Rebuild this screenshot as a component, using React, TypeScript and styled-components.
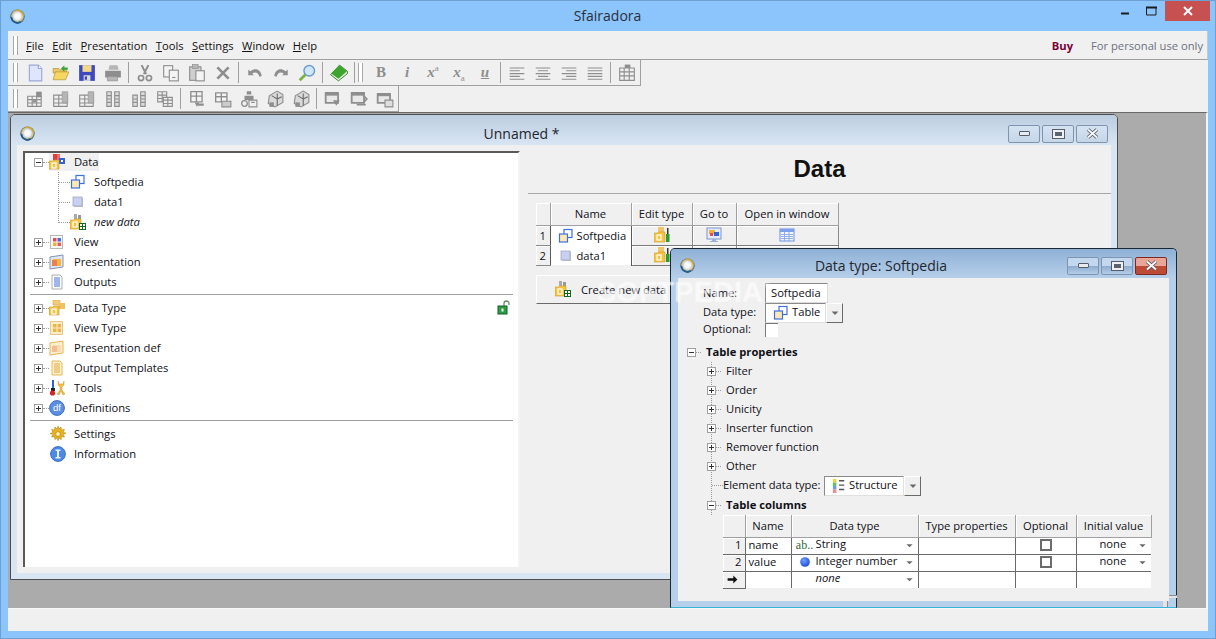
import React from "react";
import styled, { createGlobalStyle } from "styled-components";

const Global = createGlobalStyle`
  html, body { margin: 0; padding: 0; overflow: hidden; background: #8cc5fb; }
  body { font-family: "Open Sans", "Noto Sans", sans-serif; font-size: 11.2px; color: #101018; }
  * { box-sizing: border-box; }
`;

/* ---------- icons ---------- */
const G = "#8e8e8e";
const GL = "#b5b5b5";

const drawings: Record<string, React.ReactNode> = {
  appRing: (
    <>
      <defs>
        <radialGradient id="ringCore" cx="50%" cy="48%" r="52%">
          <stop offset="0%" stopColor="#ffffff" />
          <stop offset="42%" stopColor="#f2f3f5" />
          <stop offset="62%" stopColor="#c9ccd4" />
          <stop offset="74%" stopColor="#d8c77a" />
          <stop offset="100%" stopColor="#24435f" />
        </radialGradient>
      </defs>
      <circle cx="8" cy="8" r="7.6" fill="url(#ringCore)" />
      <path d="M1.5 8.500a6.600 6.600 0 0 0 10 5.200" fill="none" stroke="#1f5d92" strokeWidth="1.800" />
      <path d="M6 1.500a6.800 6.800 0 0 1 8.500 6" fill="none" stroke="#c9a93e" strokeWidth="1.600" />
    </>
  ),
  dataFolder: (
    <>
      <rect x="4" y="0" width="4" height="6" fill="#e33c3c" /><rect x="8" y="0" width="3" height="6" fill="#e86a6a" />
      <rect x="10" y="4" width="6" height="6" fill="#2f62d8" /><rect x="12" y="6" width="2" height="2" fill="#fff" />
      <path d="M0 7h4l1-1h5v9H0z" fill="#f5c443" stroke="#c99a2a" strokeWidth=".6" />
      <rect x="3" y="9" width="4" height="5" fill="none" stroke="#fff" strokeWidth="1.2" />
    </>
  ),
  dataFolderPale: (
    <>
      <rect x="4" y="0" width="7" height="5" fill="#f3cd7c" stroke="#d6a850" strokeWidth=".6" />
      <rect x="10" y="3" width="6" height="6" fill="#f2c05c" />
      <path d="M0 7h4l1-1h5v9H0z" fill="#f5c443" stroke="#c99a2a" strokeWidth=".6" />
      <rect x="3" y="9" width="4" height="5" fill="none" stroke="#fff" strokeWidth="1.2" />
    </>
  ),
  table: (
    <>
      <rect x="6" y="1.5" width="8" height="8" fill="#fff" stroke="#3f6fdc" strokeWidth="1.2" />
      <rect x="1.5" y="6" width="8" height="8" fill="#fde9b5" stroke="#3f6fdc" strokeWidth="1.2" />
    </>
  ),
  square: (
    <>
      <rect x="4" y="4" width="9" height="9" fill="#c5c5cf" />
      <rect x="3" y="3" width="9" height="9" fill="#c7cff2" stroke="#a5a8bd" strokeWidth=".8" />
    </>
  ),
  newData: (
    <>
      <rect x="4" y="0" width="3" height="5" fill="#aaa" /><rect x="8" y="1" width="3" height="4" fill="#999" />
      <path d="M0 6h4l1-1h6v10H0z" fill="#f5c443" stroke="#c99a2a" strokeWidth=".6" />
      <rect x="3" y="8" width="4" height="5" fill="none" stroke="#fff" strokeWidth="1.2" />
      <rect x="9.5" y="9.5" width="6" height="6" fill="#fff" stroke="#11661f" />
      <path d="M12.5 10v5M10 12.5h5" stroke="#11661f" />
    </>
  ),
  view: (
    <>
      <rect x="1.5" y="1.5" width="12" height="13" fill="#fafafa" stroke="#b8b8b8" />
      <rect x="4" y="4" width="3.5" height="3.5" fill="#e34c4c" /><rect x="8.5" y="4" width="3.5" height="3.5" fill="#3f6fdc" />
      <rect x="4" y="8.5" width="3.5" height="3.5" fill="#f1b035" /><rect x="8.5" y="8.5" width="3.5" height="3.5" fill="#e0605a" />
    </>
  ),
  viewType: (
    <>
      <rect x="1.5" y="1.5" width="12" height="13" fill="#fdeec5" stroke="#e6c98a" />
      <rect x="4" y="4" width="3.5" height="3.5" fill="#edb44a" /><rect x="8.5" y="4" width="3.5" height="3.5" fill="#edb44a" />
      <rect x="4" y="8.5" width="3.5" height="3.5" fill="#edb44a" /><rect x="8.5" y="8.5" width="3.5" height="3.5" fill="#edb44a" />
    </>
  ),
  presentation: (
    <>
      <path d="M1 3l13-2v12l-13 2z" fill="#dfe6f6" stroke="#8392b5" />
      <rect x="4" y="5" width="8" height="7" fill="#f5b83c" /><rect x="3" y="6" width="5" height="6" fill="#ea7e55" />
    </>
  ),
  presDef: (
    <>
      <path d="M1 3l13-2v12l-13 2z" fill="#fdf0cc" stroke="#e7b450" />
      <rect x="4" y="5" width="8" height="7" fill="#f8dcb0" /><rect x="3" y="6" width="5" height="6" fill="#f0bd94" />
    </>
  ),
  outputs: (
    <>
      <path d="M3 1h8l2 2v12H3z" fill="#fff" stroke="#adadad" />
      <path d="M5 4h6M5 6h6M5 8h6M5 10h6M5 12h6" stroke="#3f6fdc" />
    </>
  ),
  outputTpl: (
    <>
      <path d="M3 1h8l2 2v12H3z" fill="#fdf3d2" stroke="#eeb64e" />
      <path d="M5 4h6M5 6h6M5 8h6M5 10h6M5 12h6" stroke="#e0a63a" />
    </>
  ),
  tools: (
    <>
      <path d="M3 0h2v8H3z" fill="#2f62d8" /><path d="M2 8h4v3H2z" fill="#222" />
      <circle cx="3.5" cy="13" r="2.6" fill="#d4262a" />
      <path d="M9 1v4l2 2v3l-3 4 2 1 2-4 2 4 2-1-3-4V7l2-2V1l-1 3h-4z" fill="#f3be46" stroke="#b98d24" strokeWidth=".4" />
    </>
  ),
  df: (
    <>
      <circle cx="8" cy="8" r="7.4" fill="#5a8fe2" stroke="#3e6fc4" />
      <text x="8" y="11.3" textAnchor="middle" fontSize="9.5" fontFamily="Liberation Sans" fill="#fff">df</text>
    </>
  ),
  gear: (
    <>
      <path d="M8 0l1 3 2-2 .5 3 3-.5-1.5 2.7 3 1-3 1.3 1.5 2.5-3-.3-.5 3-2-2-1 3-1-3-2 2-.5-3-3 .3L3 8.5 0 7.5l3-1L1.500 3.500l3 .5L5 1l2 2z" fill="#e8b31f" stroke="#a87d0c" strokeWidth=".5" />
      <circle cx="8" cy="8" r="2.300" fill="#fff4c4" stroke="#b58a12" strokeWidth=".7" />
    </>
  ),
  info: (
    <>
      <circle cx="8" cy="8" r="7.400" fill="#4d8ae6" stroke="#3e6fc4" />
      <path d="M5.500 3.500h5v1.500H9v6h1.500v1.500h-5V11H7V5H5.500z" fill="#e9f1ff" />
    </>
  ),
  lock: (
    <>
      <path d="M8 6V3.500a2.500 2.500 0 0 1 5 0V5" fill="none" stroke="#6d8a6d" strokeWidth="1.300" />
      <rect x="2" y="6" width="9" height="8" fill="#2d9a44" stroke="#12602a" />
      <rect x="5.500" y="8.500" width="2" height="3" fill="#eaffea" />
    </>
  ),
  editType: (
    <>
      <rect x="4" y="0" width="6" height="6" fill="#f1c56b" />
      <path d="M0 6h4l1-1h6v10H0z" fill="#f5c443" stroke="#c99a2a" strokeWidth=".6" />
      <rect x="3" y="8" width="4" height="5" fill="none" stroke="#fff" strokeWidth="1.200" />
      <path d="M13 1h1.500v6H13z" fill="#333" /><path d="M12 7h3.500v8H12z" fill="#2f9a35" />
    </>
  ),
  goTo: (
    <>
      <rect x="1" y="1" width="14" height="11" fill="#e4ecfa" stroke="#7d96c9" />
      <rect x="3" y="3" width="6" height="4" fill="#f1b035" /><rect x="8" y="5" width="5" height="4" fill="#2f62d8" /><rect x="4" y="6" width="3" height="3" fill="#e34c4c" />
      <path d="M6 12h4v2h2v1H4v-1h2z" fill="#9cb0d6" />
    </>
  ),
  openWindow: (
    <>
      <rect x="1" y="2" width="14" height="12" fill="#f2f5ff" stroke="#6d8fe0" />
      <rect x="1" y="2" width="14" height="3" fill="#7ea0ea" />
      <path d="M2 7.500h12M2 9.500h12M2 11.500h12M5.500 5v9M10 5v9" stroke="#7ea0ea" strokeWidth=".8" />
    </>
  ),
  structure: (
    <>
      <rect x="1" y="0" width="4" height="4" fill="#f0d23a" /><rect x="1" y="4" width="4" height="4" fill="#5fc26b" />
      <rect x="1" y="8" width="4" height="4" fill="#6f9be6" /><rect x="1" y="12" width="4" height="4" fill="#ee8d8d" />
      <path d="M8 2h6M8 7h6M8 12h6" stroke="#555" strokeWidth="1.600" />
    </>
  ),
  intNum: (
    <>
      <defs>
        <radialGradient id="ballFill" cx="40%" cy="35%" r="70%">
          <stop offset="0%" stopColor="#6ea0ff" /><stop offset="100%" stopColor="#1a49cf" />
        </radialGradient>
      </defs>
      <circle cx="8" cy="8" r="5.500" fill="url(#ballFill)" />
    </>
  ),
  arrowRow: <path d="M2 6.500h7V3l5 5-5 5V9.500H2z" fill="#111" />,
  caret: <path d="M3.500 6h9L8 10.500z" fill="#6a6a6a" />,
  plus: <path d="M2 4.500h5M4.500 2v5" stroke="#333" />,
  minus: <path d="M2 4.500h5" stroke="#333" />,

  /* toolbar, enabled */
  newDoc: (
    <>
      <path d="M3 1h8l3 3v11H3z" fill="#dfe5fb" stroke="#9aa7d8" />
      <path d="M11 1v3h3" fill="#fff" stroke="#9aa7d8" />
    </>
  ),
  open: (
    <>
      <path d="M1 4h5l1 1h6v3H1z" fill="#e9c868" stroke="#b08f2c" strokeWidth=".6" />
      <path d="M1 14l2-7h12l-3 7z" fill="#f7d65f" stroke="#b08f2c" strokeWidth=".6" />
      <path d="M8 4l3-3v2h3v2h-3v2z" fill="#3da33a" />
    </>
  ),
  save: (
    <>
      <rect x="1" y="1" width="14" height="14" fill="#3d49bd" />
      <rect x="4" y="1" width="8" height="6" fill="#f2d98c" />
      <rect x="5" y="10" width="6" height="5" fill="#dcdcdc" /><rect x="6" y="11" width="2" height="3" fill="#3d49bd" />
    </>
  ),
  find: (
    <>
      <circle cx="10" cy="6" r="4.700" fill="#cfe6fb" stroke="#6a9bd0" strokeWidth="1.300" />
      <path d="M6.500 9.500L1.500 14.500" stroke="#79b23c" strokeWidth="2.400" />
    </>
  ),
  book: (
    <>
      <path d="M.5 9.500l8-8.500 7 5.500v2L7.500 15z" fill="#e8f2e2" stroke="#277a1f" strokeWidth=".8" />
      <path d="M1 8.500L8.500 1 15 6.500 7.500 13z" fill="#3da52e" />
    </>
  ),

  /* toolbar, disabled */
  print: (
    <>
      <path d="M5 1h7l1 4H4z" fill={GL} /><path d="M1 6h14v6H1z" fill={G} />
      <path d="M3 11h9v4H3z" fill={GL} stroke={G} strokeWidth=".6" />
    </>
  ),
  cut: (
    <>
      <path d="M5 1l4 8M11 1L7 9" stroke={G} strokeWidth="1.800" />
      <circle cx="4.500" cy="12.500" r="2.300" fill="none" stroke={G} strokeWidth="1.500" />
      <circle cx="11.500" cy="12.500" r="2.300" fill="none" stroke={G} strokeWidth="1.500" />
    </>
  ),
  copy: (
    <>
      <rect x="1.500" y="1.500" width="8" height="10" fill="#f4f4f4" stroke={G} />
      <rect x="6.500" y="5.500" width="8" height="9.500" fill="#f4f4f4" stroke={G} />
      <path d="M9 12h3" stroke={G} />
    </>
  ),
  paste: (
    <>
      <rect x="1.500" y="2.500" width="10" height="12" fill="#cfcfcf" stroke={G} />
      <rect x="4" y="0.500" width="5" height="3.500" fill={GL} stroke={G} strokeWidth=".6" />
      <rect x="7" y="6" width="7.500" height="9" fill="#f4f4f4" stroke={G} />
    </>
  ),
  del: <path d="M3 3l10 10M13 3L3 13" stroke={G} strokeWidth="2.400" />,
  undo: <path d="M2 5v5h5L5.500 8.500c3-2 5.500-1 6.500 3l2-1C13 5 8.500 3 4 6.500z" fill={G} />,
  redo: <path d="M14 5v5H9l1.500-1.500c-3-2-5.500-1-6.500 3l-2-1C3 5 7.500 3 12 6.500z" fill={G} />,
  alignL: <path d="M1.500 3.500h13M1.500 6h9M1.500 8.500h13M1.500 11h9M1.500 13.500h13" stroke={G} />,
  alignC: <path d="M1.500 3.500h13M3.500 6h9M1.500 8.500h13M3.500 11h9M1.500 13.500h13" stroke={G} />,
  alignR: <path d="M1.500 3.500h13M5.500 6h9M1.500 8.500h13M5.500 11h9M1.500 13.500h13" stroke={G} />,
  alignJ: <path d="M1.500 3.500h13M1.500 6h13M1.500 8.500h13M1.500 11h13M1.500 13.500h13" stroke={G} />,
  insTable: (
    <>
      <path d="M1.500 3.500h13v11h-13zM1.500 7h13M1.500 10.500h13M5.500 3.500v11M10 3.500v11" fill="none" stroke={G} />
      <path d="M6 .5h5v3H6z" fill={G} />
    </>
  ),
  grid1: (
    <>
      <path d="M1.500 5.500h12v9h-12zM1.500 8.500h12M1.500 11.500h12M5.500 5.500v9M9.500 5.500v9" fill="none" stroke={G} />
      <path d="M9 1.500h5v5H9z" fill={G} /><rect x="6" y="9" width="3" height="2" fill={G} />
    </>
  ),
  grid2: (
    <>
      <path d="M1.500 4.500h12v10h-12zM1.500 8h12M1.500 11.500h12M6 4.500v10" fill="none" stroke={G} />
      <path d="M9 1.500h5v10H9z" fill={GL} stroke={G} strokeWidth=".5" />
    </>
  ),
  cols: <path d="M2.500 1.500h4v13h-4zM9.500 1.500h4v13h-4zM2.500 5h4M2.500 8h4M2.500 11h4M9.500 5h4M9.500 8h4M9.500 11h4" fill="#dcdcdc" stroke={G} />,
  cols2: <path d="M2.500 4.500h4v10h-4zM9.500 1.500h4v13h-4zM2.500 8h4M2.500 11h4M9.500 5h4M9.500 8h4M9.500 11h4" fill="#dcdcdc" stroke={G} />,
  multi: (
    <>
      <path d="M1.500 1.500h8v9h-8zM1.500 4.500h8M1.500 7.500h8M5.500 1.500v9" fill="#eee" stroke={G} />
      <path d="M6.500 6.500h8v8h-8zM6.500 9h8M6.500 12h8M10.500 6.500v8" fill="#eee" stroke={G} />
    </>
  ),
  cell1: (
    <>
      <path d="M2.500 1.500h10v9h-10zM7.500 1.500v9M2.500 5.500h10" fill="#f4f4f4" stroke={G} strokeWidth="1.200" />
      <path d="M6 11h4l-2 4z M9 12h5v2H9z" fill={G} />
    </>
  ),
  cell2: (
    <>
      <path d="M1.500 2.500h10v8h-10zM6.500 2.500v8M1.500 6h10" fill="#f4f4f4" stroke={G} strokeWidth="1.200" />
      <path d="M7 10h8v5H7z" fill="#ccc" stroke={G} />
    </>
  ),
  cell3: (
    <>
      <path d="M6 1h4v3H6zM4 5h8v4H4z" fill={G} />
      <circle cx="4" cy="12" r="2.500" fill="none" stroke={G} strokeWidth="1.200" />
      <path d="M8 9h7v6H8zM10 11h3" fill="#f0f0f0" stroke={G} />
    </>
  ),
  cell4: (
    <>
      <path d="M3 5l7-4 5 3v7l-7 4-6-3z" fill="#dadada" stroke={G} />
      <path d="M5 5l5 3v6M10 3v5l4-2" fill="none" stroke="#6e6e6e" />
      <path d="M3 11h4v4H3z" fill={G} />
    </>
  ),
  win1: (
    <>
      <path d="M1.500 2.500h11v9h-11z" fill="#e8e8e8" stroke={G} strokeWidth="1.600" />
      <path d="M1.500 2.500h11v2.500h-11z" fill={G} />
      <path d="M8 9h6l-3 5z" fill={G} />
    </>
  ),
  win2: (
    <>
      <path d="M1.500 2.500h11v9h-11z" fill="#e8e8e8" stroke={G} strokeWidth="1.600" />
      <path d="M1.500 2.500h11v2.500h-11z" fill={G} />
      <path d="M12 5l3 3-3 3M6 13h8" fill="none" stroke={G} strokeWidth="1.500" />
    </>
  ),
  win3: (
    <>
      <path d="M1.500 3.500h11v8h-11z" fill="#e8e8e8" stroke={G} strokeWidth="1.600" />
      <path d="M1.500 3.500h11v2h-11z" fill={G} />
      <path d="M8 9h7v6H8z" fill="#ddd" stroke={G} />
    </>
  ),
};

const IconSvg = styled.svg`
  display: block;
  flex: none;
`;

const Icon = ({ name, size = 16 }: { name: string; size?: number }) => (
  <IconSvg width={size} height={size} viewBox="0 0 16 16">
    {drawings[name]}
  </IconSvg>
);

/* ---------- main frame ---------- */
const Frame = styled.div`
  width: 1216px;
  height: 639px;
  background: #8cc5fb;
  border: 1px solid #6f9fd0;
  padding: 0 7px 7px;
  display: flex;
  flex-direction: column;
  overflow: hidden;
`;

const TitleBar = styled.div`
  height: 30px;
  flex: none;
  display: flex;
  align-items: center;
  padding-left: 2px;
`;

const TitleText = styled.div`
  flex: 1;
  text-align: center;
  font-size: 14px;
  color: #2a2f3c;
  padding-left: 79px;
  padding-bottom: 2px;
`;

const SysButtons = styled.div`
  display: flex;
  align-self: flex-start;
  margin-right: -2px;
`;

const SysButton = styled.div<{ $close?: boolean }>`
  width: ${(p) => (p.$close ? "45px" : "27px")};
  height: 20px;
  background: ${(p) => (p.$close ? "#c75050" : "transparent")};
  display: flex;
  align-items: center;
  justify-content: center;
`;

const Client = styled.div`
  flex: 1;
  min-height: 0;
  background: #f0f0f0;
  display: flex;
  flex-direction: column;
`;

const MenuBar = styled.div`
  height: 29px;
  flex: none;
  display: flex;
  align-items: center;
  border-bottom: 1px solid #a0a0a0;
  border-right: 1px solid #c8c8c8;
  padding-right: 4px;
`;

const Grip = styled.div<{ $inner?: boolean }>`
  width: 5px;
  height: 19px;
  flex: none;
  border-left: 1px solid #a8a8a8;
  border-right: 1px solid #a8a8a8;
  background: #fff;
  margin: ${(p) => (p.$inner ? "0 5px 0 0" : "0 4px 0 5px")};
`;

const Menu = styled.nav`
  display: flex;
  gap: 8.5px;
  flex: 1;
  margin-left: 4px;
`;

const MenuItem = styled.span`
  color: #111;
`;

const Buy = styled.span`
  font-weight: 700;
  color: #7a0038;
  margin-right: 18px;
`;

const Personal = styled.span`
  color: #6d7080;
`;

const ToolRow = styled.div`
  height: 26px;
  flex: none;
  display: flex;
`;

const Toolbar = styled.div`
  display: flex;
  align-items: center;
  height: 26px;
  border-right: 1px solid #a0a0a0;
  border-bottom: 1px solid #a0a0a0;
`;

const ToolButton = styled.div`
  width: 26px;
  height: 25px;
  flex: none;
  display: flex;
  align-items: center;
  justify-content: center;
`;

const ToolSep = styled.div`
  width: 1px;
  height: 21px;
  flex: none;
  background: #a0a0a0;
  margin: 0 3px 0 2px;
`;

const ToolGlyph = styled.span<{ $italic?: boolean; $under?: boolean }>`
  font-family: "Liberation Serif", serif;
  font-size: 15px;
  font-weight: 700;
  font-style: ${(p) => (p.$italic ? "italic" : "normal")};
  color: #8e8e8e;
  text-decoration: ${(p) => (p.$under ? "underline" : "none")};
  line-height: 1;

  sup, sub {
    font-size: 9px;
    font-weight: 400;
    font-style: normal;
    line-height: 0;
  }
`;

/* ---------- MDI ---------- */
const MdiArea = styled.div`
  flex: 1;
  min-height: 0;
  position: relative;
  overflow: hidden;
  background: #ababab;
  border-top: 1px solid #696969;
  border-right: 2px solid #f4f4f4;
`;

const MdiWindow = styled.section<{ $active?: boolean; $l: number; $t: number; $w: number; $h: number }>`
  position: absolute;
  left: ${(p) => p.$l}px;
  top: ${(p) => p.$t}px;
  width: ${(p) => p.$w}px;
  height: ${(p) => p.$h}px;
  border: 1px solid ${(p) => (p.$active ? "#1b2733" : "#4e4e50")};
  border-bottom-color: ${(p) => (p.$active ? "#35b4d6" : "#4e4e50")};
  border-radius: 5px 5px 0 0;
  background: ${(p) => (p.$active ? "#b6cfea" : "#d8e5f3")};
  padding: 0 ${(p) => (p.$active ? "7px" : "6px")} 6px;
  display: flex;
  flex-direction: column;
`;

const WinTitle = styled.header<{ $active?: boolean }>`
  height: ${(p) => (p.$active ? "29px" : "30px")};
  flex: none;
  margin: 0 ${(p) => (p.$active ? "-7px" : "-6px")};
  padding: ${(p) => (p.$active ? "4px" : "7px")} 9px 0 9px;
  border-radius: 4px 4px 0 0;
  display: flex;
  align-items: center;
  background: ${(p) =>
    p.$active
      ? "linear-gradient(#8fb1d6, #b6cfea)"
      : "linear-gradient(#bccde0, #d8e5f3)"};
`;

const WinName = styled.div`
  flex: 1;
  text-align: center;
  font-size: 14px;
  color: #23262e;
`;

const WinButtons = styled.div`
  display: flex;
  gap: 2px;
`;

const WinButton = styled.div<{ $tone: "idle" | "blue" | "red" }>`
  width: 32px;
  height: 18px;
  border: 1px solid ${(p) => (p.$tone === "red" ? "#7e2a22" : "#7f95af")};
  border-radius: 2px;
  background: ${(p) =>
    p.$tone === "red"
      ? "linear-gradient(#e9a596 0 48%, #c04a33 52%, #bb4b37)"
      : p.$tone === "blue"
        ? "linear-gradient(#c3d8ee 0 48%, #8eadcf 52%, #b4cde8)"
        : "linear-gradient(#d5e3f1, #c6d6e7)"};
  display: flex;
  align-items: center;
  justify-content: center;
`;

const GlyphMin = styled.div`
  width: 11px;
  height: 5px;
  background: #e8ebef;
  border: 1px solid #555d6b;
  border-radius: 1px;
`;

const GlyphMax = styled.div`
  width: 11px;
  height: 8px;
  background: #5a6370;
  border: 2px solid #eef0f3;
  outline: 1px solid #555d6b;
`;

const GlyphClose = () => (
  <IconSvg width="13" height="11" viewBox="0 0 13 11">
    <path d="M2 1.500l9 8M11 1.500l-9 8" stroke="#4c5461" strokeWidth="3.600" />
    <path d="M2 1.500l9 8M11 1.500l-9 8" stroke="#f5f5f5" strokeWidth="2" />
  </IconSvg>
);

const WinBody = styled.div`
  flex: 1;
  min-height: 0;
  background: #f0f0f0;
  display: flex;
`;

/* ---------- left tree ---------- */
const TreePanel = styled.div`
  width: 497px;
  height: 416px;
  flex: none;
  margin: 6px 8px 0 6px;
  background: #fff;
  border-left: 2px solid #5a5a5a;
  border-top: 2px solid #5a5a5a;
  border-right: 2px solid #f4f4f4;
  display: flex;
  flex-direction: column;

  & > :first-child {
    margin-top: -1px;
  }
`;

const TreeRow = styled.div`
  height: 20px;
  flex: none;
  display: flex;
  align-items: center;
  padding-right: 6px;
`;

const Expander = styled.div`
  width: 9px;
  height: 9px;
  flex: none;
  background: #fff;
  border: 1px solid #a0a0a0;
  display: flex;
  align-items: center;
  justify-content: center;
`;

const ExpSvg = styled.svg`
  display: block;
  width: 7px;
  height: 7px;
  flex: none;
`;

const Exp = ({ open }: { open?: boolean }) => (
  <Expander>
    <ExpSvg viewBox="1 1 7 7">{open ? drawings.minus : drawings.plus}</ExpSvg>
  </Expander>
);

const Dots = styled.div<{ $w: number }>`
  width: ${(p) => p.$w}px;
  flex: none;
  border-top: 1px dotted #9a9a9a;
`;

const Node = styled.div<{ $selected?: boolean; $gap?: number }>`
  display: flex;
  align-items: center;
  gap: ${(p) => p.$gap ?? 8}px;
  height: 18px;
  background: ${(p) => (p.$selected ? "#f0f0f0" : "transparent")};
`;

const Label = styled.span<{ $italic?: boolean; $bold?: boolean }>`
  font-style: ${(p) => (p.$italic ? "italic" : "normal")};
  font-weight: ${(p) => (p.$bold ? 700 : 400)};
  white-space: nowrap;
  padding-bottom: 2px;
`;

const TreeTop = styled(TreeRow)`
  padding-left: 9px;
`;

const LeafIndent = styled.div`
  width: 16px;
  flex: none;
`;

const Children = styled.div`
  padding-left: 33px;
  background-image: linear-gradient(#9a9a9a 50%, transparent 50%);
  background-size: 1px 2px;
  background-repeat: repeat-y;
  background-position: 33px 0;
`;

const LastMask = styled.div`
  width: 2px;
  height: 9px;
  margin-left: 33px;
  margin-top: -9px;
  background: #fff;
`;

const TreeRule = styled.hr`
  border: 0;
  border-top: 1px solid #a0a0a0;
  margin: 2px 5px 3px 5px;
  height: 0;
  flex: none;
  width: 483px;
`;

const LockSlot = styled.div`
  margin-left: auto;
`;

/* ---------- right data panel ---------- */
const DataPanel = styled.div`
  flex: 1;
  min-width: 0;
`;

const Heading = styled.h1`
  margin: 0;
  height: 49px;
  line-height: 48px;
  text-align: center;
  font-family: "Liberation Sans", sans-serif;
  font-size: 24px;
  font-weight: 700;
  color: #111;
  border-bottom: 1px solid #a8a8a8;
`;

const DataTable = styled.table`
  border-collapse: collapse;
  table-layout: fixed;
  margin: 9px 0 0 8px;
  width: 302px;
`;

const Th = styled.th<{ $w: number }>`
  width: ${(p) => p.$w}px;
  height: 22px;
  padding: 0;
  font-weight: 400;
  background: #f0f0f0;
  border-right: 1px solid #a0a0a0;
  border-bottom: 1px solid #a0a0a0;
  box-shadow: inset 1px 1px 0 #fff;
`;

const RowHead = styled.td`
  height: 20px;
  padding: 1px 0 0;
  text-align: center;
  background: #f0f0f0;
  border-right: 1px solid #5a5a5a;
  border-bottom: 1px solid #8a8a8a;
  box-shadow: inset 1px 1px 0 #fff;
`;

const NameCell = styled.td`
  height: 20px;
  padding: 1px 0 0 7px;
  background: #fff;
  border-right: 1px solid #5a5a5a;
`;

const CellInner = styled.div`
  display: flex;
  align-items: center;
  gap: 3px;
`;

const ActionCell = styled.td`
  height: 20px;
  padding: 0;
  background: #f0f0f0;
  border-right: 1px solid #8a8a8a;
  border-bottom: 1px solid #7a7a7a;
  box-shadow: inset 1px 1px 0 #fff;
`;

const Centered = styled.div`
  display: flex;
  justify-content: center;
`;

const CreateButton = styled.div`
  margin: 9px 0 0 8px;
  width: 200px;
  height: 29px;
  display: flex;
  align-items: center;
  gap: 10px;
  padding-left: 18px;
  background: #f0f0f0;
  border-top: 1px solid #fff;
  border-left: 1px solid #fff;
  border-bottom: 1px solid #6a6a6a;
  border-right: 1px solid #6a6a6a;
`;

/* ---------- dialog ---------- */
const DlgBody = styled.div`
  flex: 1;
  min-height: 0;
  background: #f0f0f0;
  padding: 5px 0 0 0;
  display: flex;
  flex-direction: column;
`;

const Field = styled.div<{ $h: number }>`
  height: ${(p) => p.$h}px;
  display: flex;
  align-items: center;
  padding-left: 25px;
  flex: none;
`;

const FieldLabel = styled(Label)`
  width: 62px;
  flex: none;
`;

const TextBox = styled.div`
  width: 63px;
  height: 20px;
  line-height: 18px;
  background: #fff;
  border: 1px solid #dcdcdc;
  border-top-color: #8a8a8a;
  border-left-color: #8a8a8a;
  padding-left: 5px;
`;

const Combo = styled.div<{ $w: number }>`
  width: ${(p) => p.$w}px;
  height: 20px;
  background: #fff;
  border: 1px solid #e0e0e0;
  border-top-color: #8a8a8a;
  border-left-color: #8a8a8a;
  display: flex;
  align-items: center;
  gap: 3px;
  padding-left: 7px;
  flex: none;
`;

const ComboDrop = styled.div`
  width: 17px;
  height: 20px;
  flex: none;
  background: #f0f0f0;
  border-top: 1px solid #fff;
  border-left: 1px solid #fff;
  border-right: 1px solid #6a6a6a;
  border-bottom: 1px solid #6a6a6a;
  display: flex;
  align-items: center;
  justify-content: center;
`;

const CheckBox = styled.div`
  width: 13px;
  height: 14px;
  background: #fff;
  border-top: 1px solid #7a7a7a;
  border-left: 1px solid #7a7a7a;
`;

const DlgTree = styled.div`
  margin-top: 6px;
  display: flex;
  flex-direction: column;
`;

const DlgRow = styled.div<{ $pad: number; $h?: number }>`
  height: ${(p) => p.$h ?? 19}px;
  flex: none;
  display: flex;
  align-items: center;
  padding-left: ${(p) => p.$pad}px;
`;

const DlgChildren = styled.div`
  background-image: linear-gradient(#9a9a9a 50%, transparent 50%);
  background-size: 1px 2px;
  background-repeat: repeat-y;
  background-position: 33px 0;
`;

const DlgLabel = styled(Label)`
  margin-left: 5px;
`;

const ElementLabel = styled(Label)`
  width: 101px;
  flex: none;
`;

const TinyLabel = styled(Label)`
  margin-left: 1px;
`;

const NoneLabel = styled(Label)`
  margin-left: 20px;
`;

const ColumnsTable = styled.table`
  border-collapse: collapse;
  table-layout: fixed;
  margin: 0 0 0 45px;
  width: 428px;
`;

const CTh = styled.th<{ $w: number }>`
  width: ${(p) => p.$w}px;
  height: 22px;
  padding: 0;
  font-weight: 400;
  background: #f0f0f0;
  border-right: 1px solid #a0a0a0;
  border-bottom: 1px solid #a0a0a0;
  box-shadow: inset 1px 1px 0 #fff;
`;

const CRowHead = styled.td`
  height: 17px;
  line-height: 14px;
  padding: 0 3px 1px 0;
  text-align: right;
  background: #f0f0f0;
  border-right: 1px solid #6a6a6a;
  border-bottom: 1px solid #6a6a6a;
  box-shadow: inset 1px 1px 0 #fff;
`;

const CCell = styled.td<{ $last?: boolean }>`
  height: 17px;
  line-height: 14px;
  padding: 0 3px 1px;
  background: #fff;
  border-right: 1px solid #6a6a6a;
  border-bottom: ${(p) => (p.$last ? "0" : "1px solid #6a6a6a")};
  white-space: nowrap;
  overflow: hidden;
  &:last-child {
    border-right: 0;
  }
`;

const TypeCell = styled.div`
  display: flex;
  align-items: center;
  height: 15px;
`;

const TypeIcon = styled.div`
  width: 20px;
  flex: none;
  display: flex;
  justify-content: center;
`;

const AbMark = styled.span`
  font-family: "Liberation Serif", serif;
  font-size: 12px;
  color: #2e6b33;
  white-space: nowrap;
`;

const Drop = styled.div`
  margin-left: auto;
  flex: none;
`;

const CheckSquare = styled.div`
  width: 12px;
  height: 12px;
  margin: 0 auto;
  border: 2px solid #6c6c6c;
  background: #fff;
`;

const Watermark = styled.div`
  position: absolute;
  left: 589px;
  top: 163px;
  font-family: "Liberation Sans", sans-serif;
  font-weight: 700;
  font-size: 29px;
  color: rgba(255, 255, 255, 0.38);
  text-shadow: 0 0 2px rgba(255, 255, 255, 0.45);
  pointer-events: none;

  sup {
    font-size: 9px;
    font-weight: 400;
    vertical-align: 14px;
    line-height: 0;
  }
`;

const GripTop = styled.div`
  position: absolute;
  right: -1px;
  bottom: 9px;
  width: 8px;
  height: 3px;
  background: #e4e4e4;
  border-top: 1px solid #8a8a8a;
`;

const GripBottom = styled.div`
  position: absolute;
  right: 8px;
  bottom: 0;
  width: 5px;
  height: 6px;
  background: #e4e4e4;
  border-right: 1px solid #8a8a8a;
`;

const StatusBar = styled.div`
  height: 23px;
  flex: none;
  background: #f0f0f0;
  border-top: 1px solid #f8f8f8;
`;

/* ---------- data ---------- */
const row1 = ["newDoc", "open", "save", "print", "|", "cut", "copy", "paste", "del", "|", "undo", "redo", "find", "|", "book", "|"];
const row1b = ["alignL", "alignC", "alignR", "alignJ", "|", "insTable"];
const row2 = ["grid1", "grid2", "grid2", "cols", "cols2", "multi", "|", "cell1", "cell2", "cell3", "cell4", "cell4", "|", "win1", "win2", "win3"];
const menus = [
  ["F", "ile"], ["E", "dit"], ["P", "resentation"], ["T", "ools"], ["S", "ettings"], ["W", "indow"], ["H", "elp"],
];

const tools = (names: string[]) =>
  names.map((n, i) =>
    n === "|" ? (
      <ToolSep key={i} />
    ) : (
      <ToolButton key={i}>
        <Icon name={n} size={18} />
      </ToolButton>
    ),
  );

const TopNode = ({ icon, label, extra, selected, open }: { icon: string; label: string; extra?: React.ReactNode; selected?: boolean; open?: boolean }) => (
  <TreeTop>
    <Exp open={open} />
    <Dots $w={6} />
    <Node $selected={selected} $gap={9}>
      <Icon name={icon} />
      <Label>{label}</Label>
    </Node>
    {extra}
  </TreeTop>
);

const Leaf = ({ icon, label }: { icon: string; label: string }) => (
  <TreeTop>
    <LeafIndent />
    <Node $gap={8}>
      <Icon name={icon} />
      <Label>{label}</Label>
    </Node>
  </TreeTop>
);

const ChildNode = ({ icon, label, italic }: { icon: string; label: string; italic?: boolean }) => (
  <TreeRow>
    <Dots $w={12} />
    <Node>
      <Icon name={icon} />
      <Label $italic={italic}>{label}</Label>
    </Node>
  </TreeRow>
);

const WindowBar = ({ title, active }: { title: string; active?: boolean }) => (
  <WinTitle $active={active}>
    <Icon name="appRing" size={15} />
    <WinName>{title}</WinName>
    <WinButtons>
      <WinButton $tone={active ? "blue" : "idle"}><GlyphMin /></WinButton>
      <WinButton $tone={active ? "blue" : "idle"}><GlyphMax /></WinButton>
      <WinButton $tone={active ? "red" : "idle"}><GlyphClose /></WinButton>
    </WinButtons>
  </WinTitle>
);

export default function App() {
  return (
    <Frame>
      <Global />
      <TitleBar>
        <Icon name="appRing" size={15} />
        <TitleText>Sfairadora</TitleText>
        <SysButtons>
          <SysButton>
            <IconSvg width="10" height="10" viewBox="0 0 10 10"><path d="M1 7.500h8" stroke="#1c1c1c" strokeWidth="2" /></IconSvg>
          </SysButton>
          <SysButton>
            <IconSvg width="11" height="10" viewBox="0 0 11 10"><path d="M.5 1.500h9.500v7.500H.5z" fill="none" stroke="#1c1c1c" /><path d="M0 1.500h11" stroke="#1c1c1c" strokeWidth="2" /></IconSvg>
          </SysButton>
          <SysButton $close>
            <IconSvg width="10" height="10" viewBox="0 0 10 10"><path d="M1 1l8 8M9 1L1 9" stroke="#fff" strokeWidth="2" /></IconSvg>
          </SysButton>
        </SysButtons>
      </TitleBar>
      <Client>
        <MenuBar>
          <Grip />
          <Menu>
            {menus.map(([a, b]) => (
              <MenuItem key={a}><u>{a}</u>{b}</MenuItem>
            ))}
          </Menu>
          <Buy>Buy</Buy>
          <Personal>For personal use only</Personal>
        </MenuBar>
        <ToolRow>
          <Toolbar>
            <Grip />
            {tools(row1)}
            <Grip $inner />
            <ToolButton><ToolGlyph>B</ToolGlyph></ToolButton>
            <ToolButton><ToolGlyph $italic>i</ToolGlyph></ToolButton>
            <ToolButton><ToolGlyph $italic>x<sup>a</sup></ToolGlyph></ToolButton>
            <ToolButton><ToolGlyph $italic>x<sub>a</sub></ToolGlyph></ToolButton>
            <ToolButton><ToolGlyph $italic $under>u</ToolGlyph></ToolButton>
            <ToolSep />
            {tools(row1b)}
          </Toolbar>
        </ToolRow>
        <ToolRow>
          <Toolbar>
            <Grip />
            {tools(row2)}
          </Toolbar>
        </ToolRow>
        <MdiArea>
          <MdiWindow $l={2} $t={1} $w={1108} $h={466}>
            <WindowBar title="Unnamed *" />
            <WinBody>
              <TreePanel>
                <TopNode icon="dataFolder" label="Data" open selected />
                <Children>
                  <ChildNode icon="table" label="Softpedia" />
                  <ChildNode icon="square" label="data1" />
                  <ChildNode icon="newData" label="new data" italic />
                </Children>
                <LastMask />
                <TopNode icon="view" label="View" />
                <TopNode icon="presentation" label="Presentation" />
                <TopNode icon="outputs" label="Outputs" />
                <TreeRule />
                <TopNode icon="dataFolderPale" label="Data Type" extra={<LockSlot><Icon name="lock" /></LockSlot>} />
                <TopNode icon="viewType" label="View Type" />
                <TopNode icon="presDef" label="Presentation def" />
                <TopNode icon="outputTpl" label="Output Templates" />
                <TopNode icon="tools" label="Tools" />
                <TopNode icon="df" label="Definitions" />
                <TreeRule />
                <Leaf icon="gear" label="Settings" />
                <Leaf icon="info" label="Information" />
              </TreePanel>
              <DataPanel>
                <Heading>Data</Heading>
                <DataTable>
                  <thead>
                    <tr>
                      <Th $w={14} /><Th $w={81}>Name</Th><Th $w={61}>Edit type</Th><Th $w={44}>Go to</Th><Th $w={102}>Open in window</Th>
                    </tr>
                  </thead>
                  <tbody>
                    <tr>
                      <RowHead>1</RowHead>
                      <NameCell><CellInner><Icon name="table" />Softpedia</CellInner></NameCell>
                      <ActionCell><Centered><Icon name="editType" /></Centered></ActionCell>
                      <ActionCell><Centered><Icon name="goTo" /></Centered></ActionCell>
                      <ActionCell><Centered><Icon name="openWindow" /></Centered></ActionCell>
                    </tr>
                    <tr>
                      <RowHead>2</RowHead>
                      <NameCell><CellInner><Icon name="square" />data1</CellInner></NameCell>
                      <ActionCell><Centered><Icon name="editType" /></Centered></ActionCell>
                      <ActionCell />
                      <ActionCell />
                    </tr>
                  </tbody>
                </DataTable>
                <CreateButton><Icon name="newData" />Create new data</CreateButton>
              </DataPanel>
            </WinBody>
          </MdiWindow>

          <MdiWindow $active $l={662} $t={135} $w={507} $h={360}>
            <WindowBar title="Data type: Softpedia" active />
            <DlgBody>
              <Field $h={20}><FieldLabel>Name:</FieldLabel><TextBox>Softpedia</TextBox></Field>
              <Field $h={19}><FieldLabel>Data type:</FieldLabel><Combo $w={61}><Icon name="table" /><Label>Table</Label></Combo><ComboDrop><Icon name="caret" size={12} /></ComboDrop></Field>
              <Field $h={15}><FieldLabel>Optional:</FieldLabel><CheckBox /></Field>
              <DlgTree>
                <DlgRow $pad={9}><Exp open /><Dots $w={5} /><DlgLabel $bold>Table properties</DlgLabel></DlgRow>
                <DlgChildren>
                  {["Filter", "Order", "Unicity", "Inserter function", "Remover function", "Other"].map((t) => (
                    <DlgRow key={t} $pad={29}><Exp /><Dots $w={5} /><DlgLabel>{t}</DlgLabel></DlgRow>
                  ))}
                  <DlgRow $pad={34}>
                    <Dots $w={11} />
                    <ElementLabel>Element data type:</ElementLabel>
                    <Combo $w={80}><Icon name="structure" size={14} /><Label>Structure</Label></Combo>
                    <ComboDrop><Icon name="caret" size={12} /></ComboDrop>
                  </DlgRow>
                  <DlgRow $pad={29} $h={20}><Exp open /><Dots $w={5} /><DlgLabel $bold>Table columns</DlgLabel></DlgRow>
                </DlgChildren>
                <ColumnsTable>
                  <thead>
                    <tr>
                      <CTh $w={22} /><CTh $w={46}>Name</CTh><CTh $w={127}>Data type</CTh><CTh $w={97}>Type properties</CTh><CTh $w={61}>Optional</CTh><CTh $w={75}>Initial value</CTh>
                    </tr>
                  </thead>
                  <tbody>
                    <tr>
                      <CRowHead>1</CRowHead>
                      <CCell>name</CCell>
                      <CCell><TypeCell><TypeIcon><AbMark>ab..</AbMark></TypeIcon><TinyLabel>String</TinyLabel><Drop><Icon name="caret" size={11} /></Drop></TypeCell></CCell>
                      <CCell />
                      <CCell><CheckSquare /></CCell>
                      <CCell><TypeCell><NoneLabel>none</NoneLabel><Drop><Icon name="caret" size={11} /></Drop></TypeCell></CCell>
                    </tr>
                    <tr>
                      <CRowHead>2</CRowHead>
                      <CCell>value</CCell>
                      <CCell><TypeCell><TypeIcon><Icon name="intNum" size={14} /></TypeIcon><TinyLabel>Integer number</TinyLabel><Drop><Icon name="caret" size={11} /></Drop></TypeCell></CCell>
                      <CCell />
                      <CCell><CheckSquare /></CCell>
                      <CCell><TypeCell><NoneLabel>none</NoneLabel><Drop><Icon name="caret" size={11} /></Drop></TypeCell></CCell>
                    </tr>
                    <tr>
                      <CRowHead><Centered><Icon name="arrowRow" size={13} /></Centered></CRowHead>
                      <CCell $last />
                      <CCell $last><TypeCell><TypeIcon /><TinyLabel $italic>none</TinyLabel><Drop><Icon name="caret" size={11} /></Drop></TypeCell></CCell>
                      <CCell $last />
                      <CCell $last />
                      <CCell $last />
                    </tr>
                  </tbody>
                </ColumnsTable>
              </DlgTree>
            </DlgBody>
            <GripTop />
            <GripBottom />
          </MdiWindow>
          <Watermark>SOFTPEDIA<sup>®</sup></Watermark>
        </MdiArea>
        <StatusBar />
      </Client>
    </Frame>
  );
}
